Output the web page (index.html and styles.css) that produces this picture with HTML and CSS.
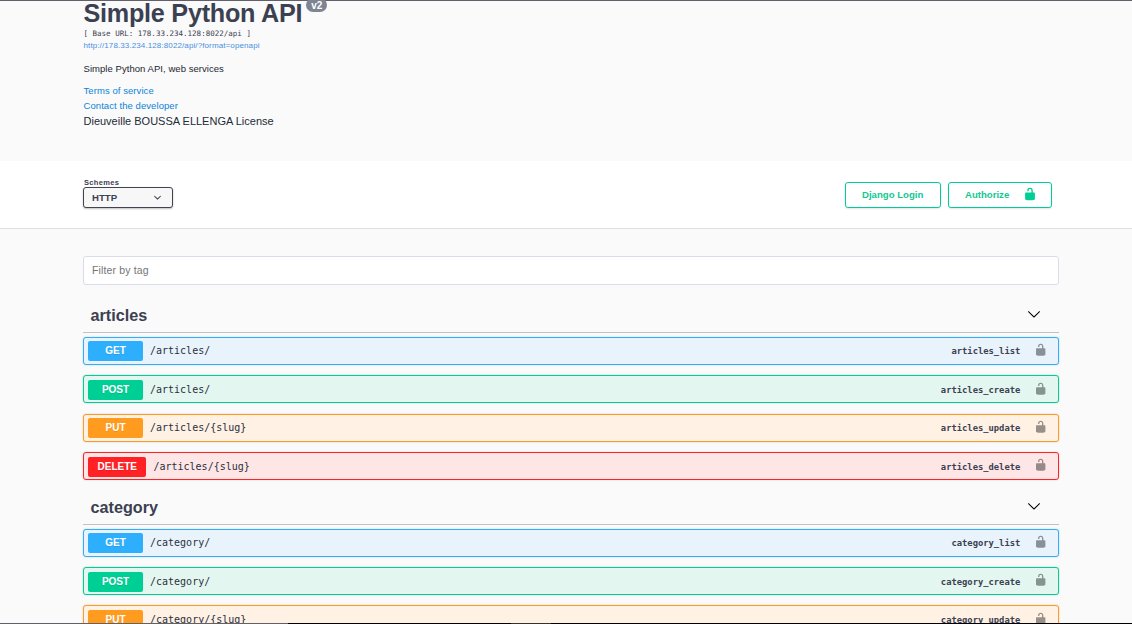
FILE: index.html
```html
<!DOCTYPE html>
<html lang="en">
<head>
<meta charset="utf-8">
<title>Simple Python API</title>
<link rel="stylesheet" href="styles.css">
</head>
<body>
<svg class="defs" aria-hidden="true">
  <symbol id="unlocked" viewBox="0 0 20 20"><path d="M15.8 8H14V5.6C14 2.703 12.665 1 10 1 7.334 1 6 2.703 6 5.6V6h2v-.801C8 3.754 8.797 3 10 3c1.203 0 2 .754 2 2.199V8H4c-.553 0-1 .646-1 1.199V17c0 .549.428 1.139.951 1.307l1.197.387C5.672 18.861 6.55 19 7.1 19h5.8c.549 0 1.428-.139 1.951-.307l1.196-.387c.524-.167.953-.757.953-1.306V9.199C17 8.646 16.352 8 15.8 8z"/></symbol>
  <symbol id="arrow" viewBox="0 0 20 20"><path d="M17.418 6.109c.272-.268.709-.268.979 0s.271.701 0 .969l-7.908 7.83c-.27.268-.707.268-.979 0l-7.908-7.83c-.27-.268-.27-.701 0-.969.271-.268.709-.268.979 0L10 13.25l7.418-7.141z"/></symbol>
  <symbol id="caret" viewBox="0 0 20 20"><path d="M13.418 7.859c.271-.268.709-.268.978 0 .27.268.272.701 0 .969l-3.908 3.83c-.27.268-.707.268-.979 0l-3.908-3.83c-.27-.267-.27-.701 0-.969.271-.268.709-.268.978 0L10 11l3.418-3.141z"/></symbol>
</svg>
<header class="info">
  <div class="heading"><h1 class="title">Simple Python API</h1><span class="version">v2</span></div>
  <div class="base-url">[ Base URL: 178.33.234.128:8022/api ]</div>
  <a class="spec-link">http://178.33.234.128:8022/api/?format=openapi</a>
  <p class="description">Simple Python API, web services</p>
  <a class="link">Terms of service</a>
  <a class="link">Contact the developer</a>
  <div class="license">Dieuveille BOUSSA ELLENGA License</div>
</header>
<section class="schemes">
  <div class="scheme-field">
    <label class="scheme-label">Schemes</label>
    <div class="select"><span>HTTP</span><svg class="caret"><use href="#caret"/></svg></div>
  </div>
  <div class="auth">
    <button class="btn login">Django Login</button>
    <button class="btn authorize"><span>Authorize</span><svg class="btn-lock"><use href="#unlocked"/></svg></button>
  </div>
</section>
<main class="operations">
  <input class="filter" type="text" placeholder="Filter by tag">
  <section class="tag">
    <h2 class="tag-head"><span>articles</span><svg class="arrow"><use href="#arrow"/></svg></h2>
    <div class="op get"><span class="method">GET</span><span class="path">/articles/</span><span class="op-id">articles_list</span><svg class="lock"><use href="#unlocked"/></svg></div>
    <div class="op post"><span class="method">POST</span><span class="path">/articles/</span><span class="op-id">articles_create</span><svg class="lock"><use href="#unlocked"/></svg></div>
    <div class="op put"><span class="method">PUT</span><span class="path">/articles/{slug}</span><span class="op-id">articles_update</span><svg class="lock"><use href="#unlocked"/></svg></div>
    <div class="op delete"><span class="method">DELETE</span><span class="path">/articles/{slug}</span><span class="op-id">articles_delete</span><svg class="lock"><use href="#unlocked"/></svg></div>
  </section>
  <section class="tag">
    <h2 class="tag-head"><span>category</span><svg class="arrow"><use href="#arrow"/></svg></h2>
    <div class="op get"><span class="method">GET</span><span class="path">/category/</span><span class="op-id">category_list</span><svg class="lock"><use href="#unlocked"/></svg></div>
    <div class="op post"><span class="method">POST</span><span class="path">/category/</span><span class="op-id">category_create</span><svg class="lock"><use href="#unlocked"/></svg></div>
    <div class="op put"><span class="method">PUT</span><span class="path">/category/{slug}</span><span class="op-id">category_update</span><svg class="lock"><use href="#unlocked"/></svg></div>
  </section>
</main>
<div class="window-edge"></div>
</body>
</html>
```
FILE: styles.css
```css
* { box-sizing: border-box; }

html { height: 624px; overflow: hidden; }
body {
  position: relative;
  display: flex;
  flex-direction: column;
  height: 624px;
  margin: 0;
  overflow: hidden;
  background: #fafafa;
  color: #3b4151;
  font-family: "Liberation Sans", Arial, sans-serif;
}

svg { display: block; flex: none; fill: currentColor; }
.defs { position: absolute; width: 0; height: 0; }

.info {
  flex: none;
  height: 161px;
  padding-left: 83.5px;
  border-top: 1px solid #62616a;
}
.heading { display: flex; height: 27px; }
.title { margin: -2px 0 0; font-size: 25.2px; letter-spacing: -.25px; line-height: 29px; white-space: nowrap; }
.version {
  height: 14px;
  margin: -3px 0 0 4px;
  padding: 0 5px;
  border-radius: 7px;
  background: #7d8492;
  color: #fff;
  font-size: 10px;
  font-weight: 700;
  line-height: 15px;
}
.base-url {
  height: 11px;
  font: 7.53px/11px "DejaVu Sans Mono", monospace;
  color: #3b4151;
}
.spec-link { display: block; padding-top: 1px; font-size: 8px; letter-spacing: .11px; line-height: 12px; color: #4990e2; }
.description { margin: 10px 0 8px; font-size: 9.5px; letter-spacing: .05px; line-height: 13px; color: #22262f; }
.link { display: block; font-size: 9.5px; letter-spacing: .07px; line-height: 15px; color: #0b84d8; }
.license { padding-top: 1px; font-size: 11px; line-height: 15px; color: #222b36; }

.schemes {
  display: flex;
  flex: none;
  justify-content: space-between;
  height: 68px;
  padding: 16px 80px 0 83px;
  border-bottom: 1px solid #dedfe1;
  background: #fff;
}
.scheme-label { display: block; height: 10px; padding-left: 1px; font-size: 7.5px; font-weight: 700; letter-spacing: .35px; line-height: 11px; }
.select {
  display: flex;
  align-items: center;
  justify-content: space-between;
  width: 90px;
  height: 21px;
  padding: 0 7px 0 8px;
  border: 1px solid #41444e;
  border-radius: 3px;
  background: #f7f7f7;
  box-shadow: 0 1px 2px rgba(0, 0, 0, .25);
  font-size: 9.6px;
  font-weight: 700;
}
.caret { width: 15px; height: 15px; }
.auth { display: flex; gap: 7px; padding-top: 5px; }
.btn {
  display: flex;
  align-items: center;
  height: 26px;
  padding: 0 16px 2px;
  border: 1px solid #0c9;
  border-radius: 3px;
  background: #fff;
  box-shadow: 0 1px 2px rgba(0, 0, 0, .1);
  color: #13c890;
  font: 700 9.6px "Liberation Sans", Arial, sans-serif;
}
.login { width: 96px; }
.authorize { width: 104px; justify-content: space-between; padding-right: 14px; }
.btn-lock { width: 14px; height: 14px; color: #00cf95; }

.operations { flex: 1; min-height: 0; overflow: hidden; padding: 27px 73px 0 83px; }
.filter {
  display: block;
  width: 976px;
  height: 29px;
  margin-bottom: 14px;
  padding: 0 8px 2px;
  border: 1px solid #d8dde7;
  border-radius: 3px;
  background: #fff;
  font: 10.5px "Liberation Sans", Arial, sans-serif;
  letter-spacing: .15px;
}
.tag { height: 191.65px; }
.tag-head {
  display: flex;
  align-items: center;
  justify-content: space-between;
  height: 34px;
  margin: 0 0 4px;
  padding: 0 18px 1px 7.5px;
  border-bottom: 1px solid #c0c2c7;
  font-size: 16.2px;
}
.tag-head span { padding-top: .8px; }
.arrow { width: 14px; height: 14px; margin-top: -2px; color: #000; }
.op {
  display: flex;
  align-items: center;
  height: 28px;
  margin-bottom: 10.4px;
  padding: .96px 11px 0 4px;
  border: 1px solid var(--tone);
  border-radius: 3px;
  background: var(--tint);
  box-shadow: 0 0 2px rgba(0, 0, 0, .19);
}
.get { --tone: #2daffe; --tint: #e8f3fc; }
.post { --tone: #00cf95; --tint: #e3f7f0; }
.put { --tone: #ff9c20; --tint: #fff1e4; }
.delete { --tone: #ff2124; --tint: #ffe6e6; }
.method {
  min-width: 55px;
  height: 20px;
  padding: 0 9.5px;
  border-radius: 2px;
  background: var(--tone);
  color: #fff;
  font-size: 10px;
  font-weight: 700;
  line-height: 20px;
  text-align: center;
  text-shadow: 0 1px 0 rgba(0, 0, 0, .1);
}
.path { flex: 1; padding-left: 7px; color: #2b303c; font: 10px/16px "DejaVu Sans Mono", monospace; }
.op-id { font: 700 8.8px/14px "DejaVu Sans Mono", monospace; }
.lock { width: 13.4px; height: 13.4px; margin: -3px 0 0 13.3px; color: #000; opacity: .4; }

.window-edge {
  position: absolute;
  bottom: 0;
  left: 0;
  width: 100%;
  height: 1px;
  background: linear-gradient(90deg, #62616a 288px, #000 288px 511px, #333 511px 551px, #000 551px);
}
```
